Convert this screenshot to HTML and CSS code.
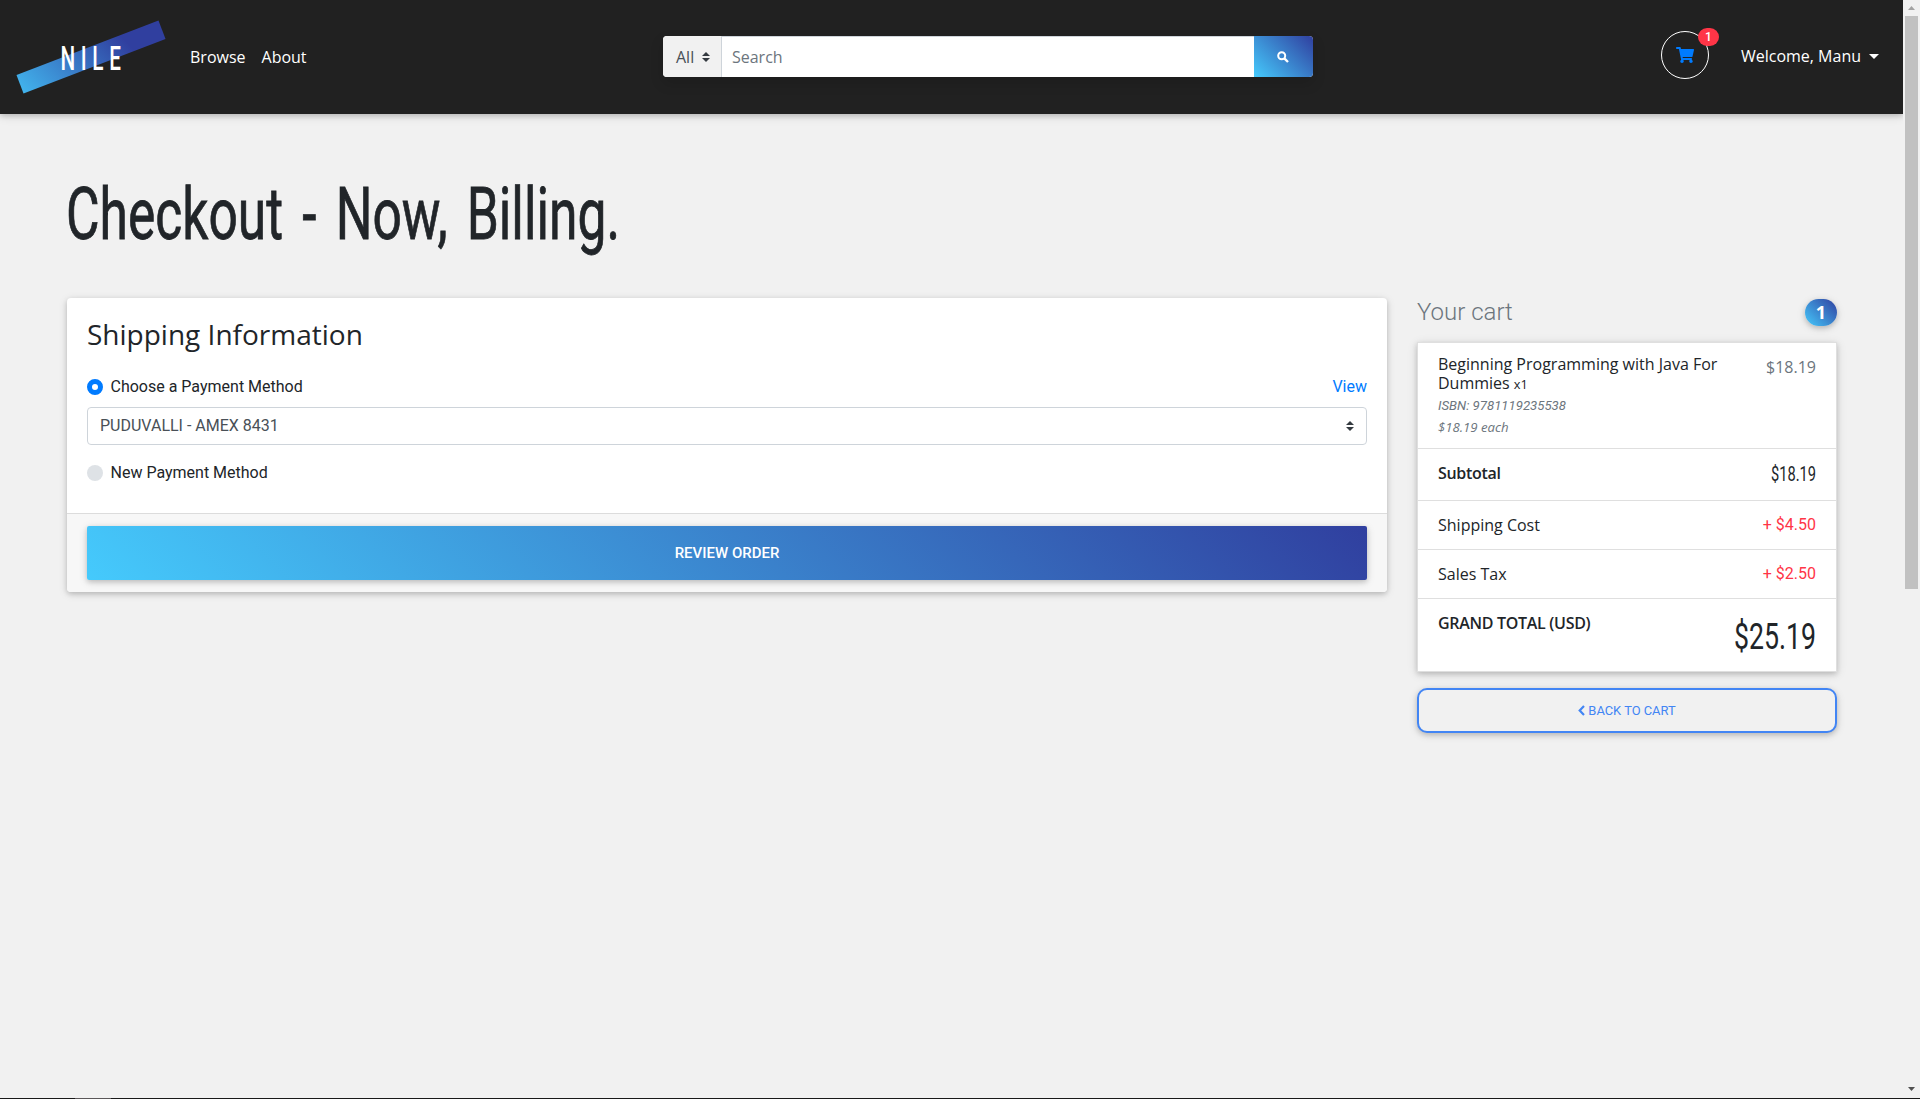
FILE: index.html
```html
<!DOCTYPE html>
<html lang="en">
<head>
<meta charset="utf-8">
<title>Nile - Checkout</title>
<link rel="stylesheet" href="styles.css">
</head>
<body>
<div class="window">
  <div class="page">
    <nav class="navbar">
      <svg class="logo" width="160" height="84" viewBox="0 0 160 84">
        <defs>
          <linearGradient id="band" gradientUnits="userSpaceOnUse" x1="10" y1="110" x2="105" y2="20">
            <stop offset="0" stop-color="#45cafc"/><stop offset="1" stop-color="#303f9f"/>
          </linearGradient>
        </defs>
        <path d="M1.500 60 143.500 5.500 150.500 24 8.500 78.500z" fill="url(#band)"/>
        <text class="logo-text" x="45.500" y="54.500" textLength="66" lengthAdjust="spacingAndGlyphs">NILE</text>
      </svg>
      <div class="links"><a>Browse</a><a>About</a></div>
      <form class="search">
        <div class="scope">All
          <svg width="8" height="10" viewBox="0 0 4 5"><path fill="#343a40" d="M2 0 0 2h4zm0 5L0 3h4z"/></svg>
        </div>
        <div class="query">Search</div>
        <div class="go">
          <svg width="12" height="12" viewBox="0 0 12 12" fill="none" stroke="#fff" stroke-width="2"><circle cx="4.700" cy="4.700" r="3.500"/><path d="m7.300 7.300 3.700 3.700" stroke-width="2.400"/></svg>
        </div>
      </form>
      <div class="cart-link">
        <svg width="18" height="16" viewBox="0 0 576 512"><path fill="#007bff" d="M528.120 301.319l47.273-208C578.806 78.301 567.391 64 551.990 64H159.208l-9.166-44.810C147.758 8.021 137.930 0 126.529 0H24C10.745 0 0 10.745 0 24v16c0 13.255 10.745 24 24 24h69.883l70.248 343.435C147.325 417.100 136 435.222 136 456c0 30.928 25.072 56 56 56s56-25.072 56-56c0-15.674-6.447-29.835-16.824-40h209.647C430.447 426.165 424 440.326 424 456c0 30.928 25.072 56 56 56s56-25.072 56-56c0-22.172-12.888-41.332-31.579-50.405l5.517-24.276c3.413-15.018-8.002-29.319-23.403-29.319H218.117l-6.545-32h293.145c11.206 0 20.920-7.754 23.403-18.681z"/></svg>
        <span class="count">1</span>
      </div>
      <div class="user">Welcome, Manu<i class="caret"></i></div>
    </nav>

    <main class="container">
      <h1 class="title"><svg width="840" height="100" viewBox="0 0 840 100"><text class="narrow" x="-1" y="66" font-size="73" word-spacing="9" textLength="554" lengthAdjust="spacingAndGlyphs">Checkout - Now, Billing.</text></svg></h1>
      <div class="columns">
        <section class="card">
          <div class="card-body">
            <h2>Shipping Information</h2>
            <div class="option"><i class="radio on"></i><span>Choose a Payment Method</span><a>View</a></div>
            <div class="select"><span>PUDUVALLI - AMEX 8431</span>
              <svg width="8" height="10" viewBox="0 0 4 5"><path fill="#343a40" d="M2 0 0 2h4zm0 5L0 3h4z"/></svg>
            </div>
            <div class="option"><i class="radio"></i><span>New Payment Method</span></div>
          </div>
          <div class="card-footer"><button class="review">REVIEW ORDER</button></div>
        </section>

        <aside class="cart">
          <header class="cart-head"><h4>Your cart</h4><span class="pill">1</span></header>
          <ul class="summary">
            <li class="item">
              <div>
                <h6>Beginning Programming with Java For<br>Dummies <small>x1</small></h6>
                <p class="isbn">ISBN: 9781119235538</p>
                <p class="each">$18.19 each</p>
              </div>
              <span class="price">$18.19</span>
            </li>
            <li class="subtotal"><b>Subtotal</b>
              <svg width="60" height="28" viewBox="0 0 60 28"><text class="narrow" x="15" y="20" font-size="20" textLength="45" lengthAdjust="spacingAndGlyphs">$18.19</text></svg></li>
            <li><span>Shipping Cost</span><span class="fee">+ $4.50</span></li>
            <li><span>Sales Tax</span><span class="fee">+ $2.50</span></li>
            <li class="total"><b>GRAND TOTAL (USD)</b>
              <svg width="100" height="48" viewBox="0 0 100 48"><text class="narrow" x="18" y="38" font-size="36" textLength="82" lengthAdjust="spacingAndGlyphs">$25.19</text></svg></li>
          </ul>
          <button class="back"><svg width="7" height="11" viewBox="0 0 7 11"><path d="M6 1 1.700 5.500 6 10" fill="none" stroke="#4285f4" stroke-width="2.200"/></svg>BACK TO CART</button>
        </aside>
      </div>
    </main>
  </div>
  <div class="scrollbar">
    <svg width="17" height="16" viewBox="0 0 17 16"><path fill="#a3a3a3" d="M5 10h7L8.500 6z"/></svg>
    <div class="thumb"></div>
    <svg width="17" height="17" viewBox="0 0 17 17"><path fill="#505050" d="M5 6h7L8.500 10z"/></svg>
  </div>
</div>
<div class="taskbar"><i></i></div>
</body>
</html>
```
FILE: styles.css
```css
* { box-sizing: border-box; }
body {
  margin: 0;
  height: 1099px;
  overflow: hidden;
  display: flex;
  flex-direction: column;
  background: #f1f1f1;
  color: #212529;
  font: 400 16px/24px "Open Sans", sans-serif;
}
h1, h2, h4, h6, p, ul { margin: 0; padding: 0; font-weight: inherit; }
svg { display: block; flex: none; overflow: visible; }
.window { flex: 1; display: flex; min-height: 0; }
.page { flex: 1; min-width: 0; }
.narrow, .logo-text { font-family: Roboto, sans-serif; font-weight: 400; fill: #212529; }
.title .narrow { stroke: #212529; stroke-width: .8px; }

/* Navigation */
.navbar {
  height: 114px;
  display: flex;
  align-items: center;
  padding: 0 24px 0 15px;
  background: #212121;
  color: #fff;
  box-shadow: 0 2px 5px rgba(0,0,0,.16), 0 2px 10px rgba(0,0,0,.12);
}
.logo-text { font-size: 33px; fill: #fff; font-weight: 500; letter-spacing: 9px; }
.links { display: flex; gap: 16px; width: 488px; padding-left: 15px; }
.search {
  display: flex;
  width: 650px;
  height: 41px;
  margin-bottom: 1px;
  border-radius: 4px;
  overflow: hidden;
  background: #fff;
  color: #6c757d;
  box-shadow: 0 6px 14px rgba(0,0,0,.14);
}
.scope {
  width: 59px;
  display: flex;
  align-items: center;
  gap: 8px;
  padding-left: 13px;
  background: #f1f1f1;
  border-right: 1px solid #ced4da;
  color: #495057;
}
.query { flex: 1; padding: 8px 10px; border-top: 1px solid #ced4da; }
.go {
  width: 59px;
  display: grid;
  place-items: center;
  background: linear-gradient(45deg, #45cafc, #303f9f);
}
.cart-link {
  position: relative;
  width: 48px;
  height: 48px;
  margin: -4px 32px 0 348px;
  display: grid;
  place-items: center;
  border: 1px solid #fff;
  border-radius: 50%;
}
.count {
  position: absolute;
  left: 36px;
  top: -4px;
  width: 21px;
  height: 18px;
  border-radius: 9px;
  background: #ff3547;
  font: 500 12px/18px Roboto, sans-serif;
  text-align: center;
}
.user { display: flex; align-items: center; gap: 8px; margin-top: -2px; white-space: nowrap; }
.caret { border: 5px solid transparent; border-top-color: #fff; border-bottom: 0; }

/* Main content */
.container { padding: 59px 66px 0 67px; }
.title { height: 125px; }
.columns { display: grid; grid-template-columns: 1320px 420px; gap: 30px; align-items: start; }
.card {
  background: #fff;
  border-radius: 4px;
  overflow: hidden;
  box-shadow: 0 2px 5px rgba(0,0,0,.16), 0 2px 10px rgba(0,0,0,.12);
}
.card-body { height: 215px; padding: 19px 20px; }
.card h2 { font-size: 28px; line-height: 34px; margin-bottom: 24px; }
.option { display: flex; align-items: center; gap: 7.500px; font: 400 16px/24px Roboto, sans-serif; }
.option a { margin-left: auto; color: #007bff; }
.radio { width: 16px; height: 16px; border-radius: 50%; background: #dee2e6; }
.radio.on { border: 5px solid #007bff; background: #fff; }
.select {
  height: 38px;
  margin: 8px 0 16px;
  padding: 0 12px;
  display: flex;
  align-items: center;
  justify-content: space-between;
  border: 1px solid #ced4da;
  border-radius: 4px;
  color: #495057;
  font: 400 16px/24px Roboto, sans-serif;
}
.card-footer { padding: 12px 20px; background: #f7f7f7; border-top: 1px solid #dcdcdc; }
.review {
  display: block;
  width: 100%;
  height: 54px;
  border: 0;
  border-radius: 2px;
  background: linear-gradient(45deg, #45cafc, #303f9f);
  color: #fff;
  font: 500 15px/20px Roboto, sans-serif;
  box-shadow: 0 2px 5px rgba(0,0,0,.16), 0 2px 10px rgba(0,0,0,.12);
}

/* Cart summary */
.cart-head { height: 44px; display: flex; justify-content: space-between; align-items: flex-start; }
.cart-head h4 { color: #6c757d; font: 300 24px/28px Roboto, sans-serif; }
.pill {
  width: 32px;
  height: 27px;
  margin-top: 1px;
  border-radius: 14px;
  background: linear-gradient(45deg, #45cafc, #303f9f);
  color: #fff;
  font-size: 18px;
  font-weight: 700;
  line-height: 26px;
  text-align: center;
  box-shadow: 0 2px 5px rgba(0,0,0,.16), 0 2px 10px rgba(0,0,0,.12);
}
.summary {
  list-style: none;
  background: #fff;
  border: 1px solid #dfdfdf;
  box-shadow: 0 2px 5px rgba(0,0,0,.16), 0 2px 10px rgba(0,0,0,.12);
}
.summary li {
  height: 49px;
  display: flex;
  justify-content: space-between;
  padding: 12px 20px;
  border-bottom: 1px solid #dfdfdf;
}
.summary .item { height: 106px; }
.summary .subtotal { height: 52px; }
.summary .total { height: 72px; border: 0; }
.summary h6 { font-size: 16px; line-height: 19px; white-space: nowrap; }
.summary small { font-size: 12.800px; }
.summary b { font-weight: 600; letter-spacing: -.3px; }
.isbn, .each { color: #6c757d; font: italic 400 13.200px/22px Roboto, sans-serif; }
.isbn { padding-top: 1px; }
.each { margin-top: -1px; font-family: "Open Sans", sans-serif; }
.price { color: #6c757d; }
.fee { color: #ff3547; font: 400 16px/24px Roboto, sans-serif; }
.back {
  display: flex;
  align-items: center;
  justify-content: center;
  gap: 3px;
  width: 100%;
  height: 45px;
  margin-top: 16px;
  border: 2px solid #4285f4;
  border-radius: 10px;
  background: #f1f1f1;
  color: #4285f4;
  font: 400 12.900px/20px Roboto, sans-serif;
  box-shadow: 0 2px 5px rgba(0,0,0,.16), 0 2px 10px rgba(0,0,0,.12);
}

/* Window edges */
.scrollbar { width: 17px; display: flex; flex-direction: column; background: #f1f1f1; }
.thumb { width: 13px; height: 573px; margin: 0 2px auto; background: #c1c1c1; }
.taskbar { height: 1px; background: #191919; }
.taskbar i { display: block; width: 36px; height: 1px; margin-left: 75px; background: #5b5759; }
```
